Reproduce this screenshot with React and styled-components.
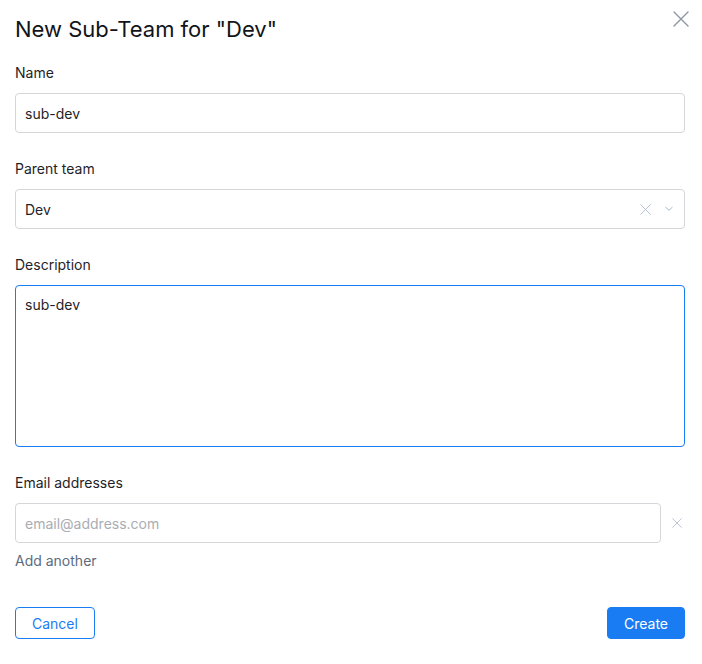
import React, { useState } from 'react';
import styled, { createGlobalStyle } from 'styled-components';

const Global = createGlobalStyle`
  html, body {
    margin: 0;
    padding: 0;
    background: #ffffff;
  }
  * {
    box-sizing: border-box;
  }
  body {
    font-family: Inter, "Liberation Sans", sans-serif;
    color: #1f2329;
  }
`

const Modal = styled.div`
  position: relative;
  width: 702px;
  min-height: 664px;
  padding: 15px 17px 24px 15px;
  display: flex;
  flex-direction: column;
`
const Title = styled.h1`
  margin: 0 0 20px 0;
  font-size: 22px;
  line-height: 28px;
  font-weight: 400;
  color: #111418;
`
const Close = styled.button`
  position: absolute;
  top: 7px;
  right: 9px;
  width: 24px;
  height: 24px;
  padding: 0;
  border: none;
  background: transparent;
  display: flex;
  align-items: center;
  justify-content: center;
  color: #8c96a3;
  cursor: pointer;
`
const Field = styled.div`
  display: flex;
  flex-direction: column;
  margin-bottom: ${p => p.$gap ?? 26}px;
`
const Label = styled.label`
  font-size: 14px;
  line-height: 20px;
  margin-bottom: 10px;
  color: #1f2329;
`
const Input = styled.input`
  width: 100%;
  height: 40px;
  padding: 0 9px;
  border: 1px solid #d4d6d9;
  border-radius: 4px;
  font-family: inherit;
  font-size: 14px;
  color: #1f2329;
  outline: none;
  &::placeholder {
    color: #a9adb3;
  }
`
const SelectBox = styled.div`
  height: 40px;
  padding: 0 11px 0 9px;
  border: 1px solid #d4d6d9;
  border-radius: 4px;
  display: flex;
  align-items: center;
  font-size: 14px;
`
const SelectValue = styled.span`
  flex: 1;
`
const SelectIcons = styled.span`
  display: flex;
  align-items: center;
  gap: 14px;
  color: #a8b6c8;
`
const TextArea = styled.textarea`
  width: 100%;
  height: 162px;
  padding: 9px 9px;
  border: 1px solid #1a7cf2;
  border-radius: 4px;
  font-family: inherit;
  font-size: 14px;
  line-height: 20px;
  color: #1f2329;
  resize: none;
  outline: none;
  display: block;
`
const EmailRow = styled.div`
  display: flex;
  align-items: center;
`
const RemoveBtn = styled.button`
  width: 25px;
  height: 40px;
  padding: 0 0 0 8px;
  border: none;
  background: transparent;
  display: flex;
  align-items: center;
  justify-content: center;
  color: #a8b6c8;
  cursor: pointer;
`
const AddLink = styled.a`
  margin-top: 8px;
  font-size: 14px;
  line-height: 20px;
  color: #5c6b80;
  cursor: pointer;
  align-self: flex-start;
`
const Footer = styled.div`
  margin-top: 36px;
  display: flex;
  justify-content: space-between;
`
const Button = styled.button`
  height: 32px;
  padding: 0 16px;
  border-radius: 4px;
  border: 1px solid #1a7cf2;
  font-family: inherit;
  font-size: 14px;
  cursor: pointer;
  background: ${p => (p.$primary ? '#1a7cf2' : '#ffffff')};
  color: ${p => (p.$primary ? '#ffffff' : '#1a7cf2')};
`

const Cross = ({ size = 16, stroke = 1.3 }) => (
  <svg width={size} height={size} viewBox="0 0 16 16" fill="none">
    <path d="M1 1L15 15M15 1L1 15" stroke="currentColor" strokeWidth={stroke} strokeLinecap="round" />
  </svg>
)

const Chevron = () => (
  <svg width="8" height="8" viewBox="0 0 8 8" fill="none">
    <path d="M0.8 2.3L4 5.3L7.2 2.3" stroke="currentColor" strokeWidth="1" strokeLinecap="round" strokeLinejoin="round" />
  </svg>
)

export default function App() {
  const [name, setName] = useState('sub-dev')
  const [desc, setDesc] = useState('sub-dev')
  const [email, setEmail] = useState('')
  return (
    <Modal>
      <Global />
      <Close aria-label="Close"><Cross size={16} stroke={1.4} /></Close>
      <Title>New Sub-Team for "Dev"</Title>
      <Field>
        <Label>Name</Label>
        <Input value={name} onChange={e => setName(e.target.value)} />
      </Field>
      <Field>
        <Label>Parent team</Label>
        <SelectBox>
          <SelectValue>Dev</SelectValue>
          <SelectIcons>
            <Cross size={11} stroke={1.2} />
            <Chevron />
          </SelectIcons>
        </SelectBox>
      </Field>
      <Field>
        <Label>Description</Label>
        <TextArea value={desc} onChange={e => setDesc(e.target.value)} />
      </Field>
      <Field $gap={0}>
        <Label>Email addresses</Label>
        <EmailRow>
          <Input placeholder="email@address.com" value={email} onChange={e => setEmail(e.target.value)} />
          <RemoveBtn aria-label="Remove"><Cross size={10} stroke={1.2} /></RemoveBtn>
        </EmailRow>
        <AddLink>Add another</AddLink>
      </Field>
      <Footer>
        <Button>Cancel</Button>
        <Button $primary>Create</Button>
      </Footer>
    </Modal>
  )
}
